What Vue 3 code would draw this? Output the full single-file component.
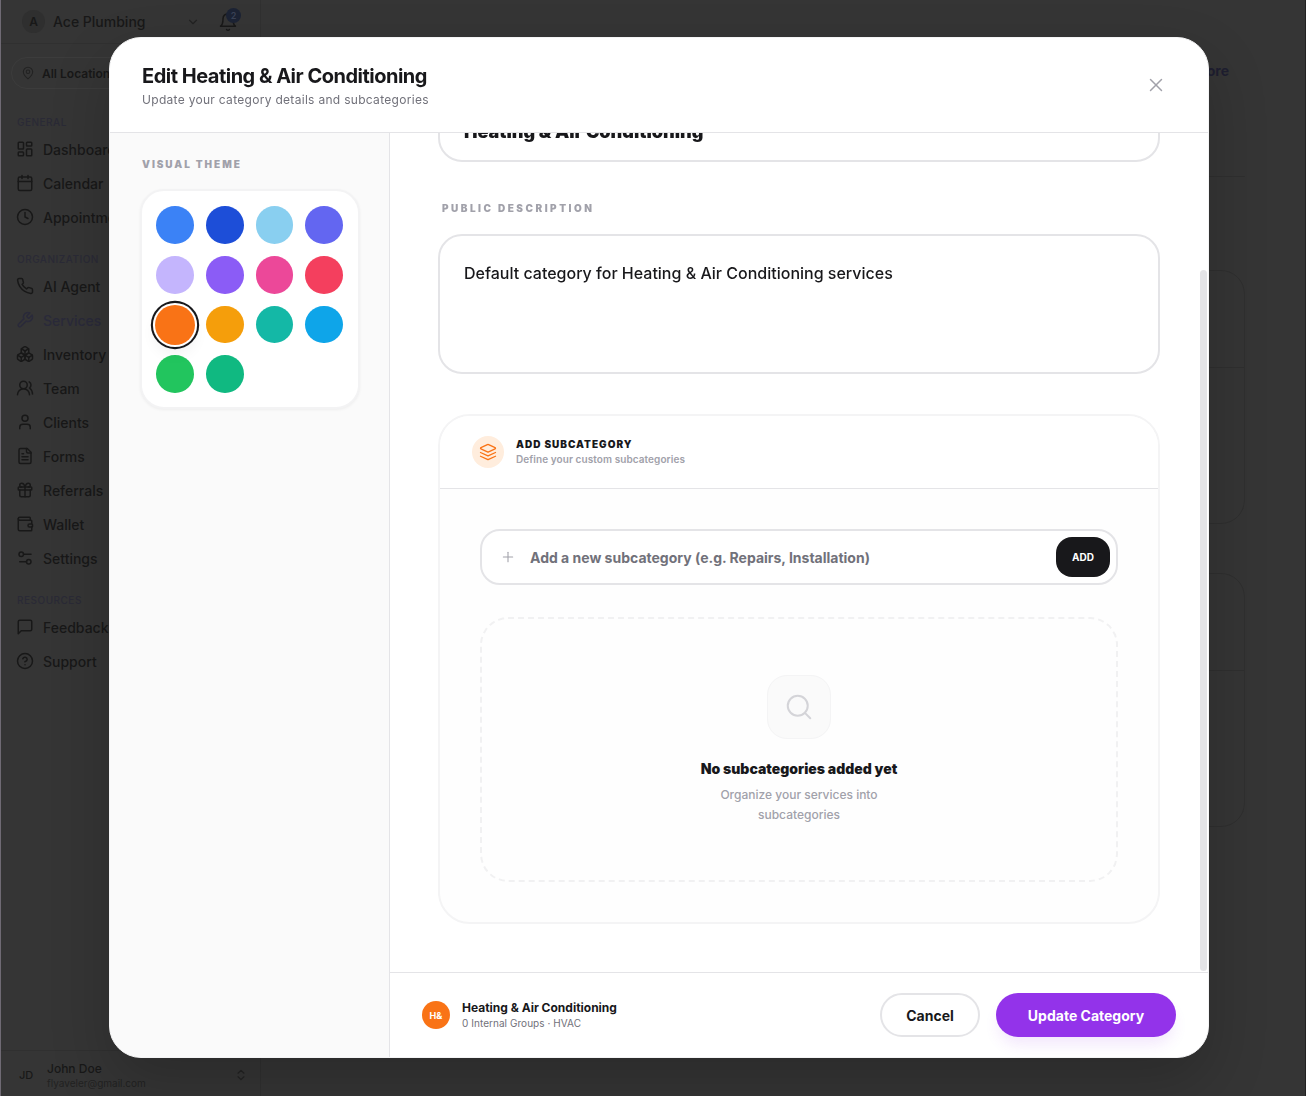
<template>
  <div class="page">
    <aside class="sidebar">
      <div class="brand">
        <span class="brand__avatar">A</span>
        <span class="brand__name">Ace Plumbing</span>
        <svg class="brand__chev" viewBox="0 0 24 24"><path d="m6 9 6 6 6-6" /></svg>
        <div class="bell">
          <svg viewBox="0 0 24 24">
            <path d="M6 8a6 6 0 0 1 12 0c0 7 3 9 3 9H3s3-2 3-9" />
            <path d="M10.3 21a1.94 1.94 0 0 0 3.4 0" />
          </svg>
          <span class="bell__badge">2</span>
        </div>
      </div>
      <div class="locations">
        <svg viewBox="0 0 24 24">
          <path d="M20 10c0 6-8 12-8 12s-8-6-8-12a8 8 0 0 1 16 0Z" />
          <path d="M9 10a3 3 0 1 0 6 0a3 3 0 1 0-6 0" />
        </svg>
        <span>All Locations</span>
      </div>
      <div v-for="group in navGroups" :key="group.title" class="nav-group">
        <div class="nav-group__title">{{ group.title }}</div>
        <div
          v-for="item in group.items"
          :key="item.label"
          class="nav-item"
          :class="{ 'nav-item--active': item.label === 'Services' }"
        >
          <svg viewBox="0 0 24 24">
            <path v-for="d in item.icon" :key="d" :d="d" />
          </svg>
          <span>{{ item.label }}</span>
        </div>
      </div>
      <div class="user">
        <span class="user__badge">JD</span>
        <div class="user__info">
          <div class="user__name">John Doe</div>
          <div class="user__mail">flyaveler@gmail.com</div>
        </div>
        <svg viewBox="0 0 24 24">
          <path d="m7 15 5 5 5-5" />
          <path d="m7 9 5-5 5 5" />
        </svg>
      </div>
    </aside>

    <main class="content">
      <div class="content__head"><span>Explore</span></div>
      <div class="bg-card"><div class="bg-card__head"></div></div>
      <div class="bg-card"><div class="bg-card__head"></div></div>
    </main>

    <div class="overlay">
      <section class="modal">
        <header class="modal__head">
          <div>
            <h2>Edit Heating &amp; Air Conditioning</h2>
            <p>Update your category details and subcategories</p>
          </div>
          <svg class="close" viewBox="0 0 24 24">
            <path d="M18 6 6 18" />
            <path d="m6 6 12 12" />
          </svg>
        </header>

        <div class="modal__body">
          <div class="theme">
            <div class="theme__label">VISUAL THEME</div>
            <div class="swatches">
              <span
                v-for="color in colors"
                :key="color"
                class="swatch"
                :class="{ 'swatch--on': color === selected }"
                :style="{ background: color }"
              ></span>
            </div>
          </div>

          <div class="editor">
            <div class="editor__scroll">
              <div class="field-name">Heating &amp; Air Conditioning</div>
              <div class="field-label">PUBLIC DESCRIPTION</div>
              <div class="field-desc">Default category for Heating &amp; Air Conditioning services</div>

              <div class="sub">
                <div class="sub__head">
                  <span class="sub__icon">
                    <svg viewBox="0 0 24 24">
                      <path d="m12.83 2.18a2 2 0 0 0-1.66 0L2.6 6.08a1 1 0 0 0 0 1.83l8.58 3.91a2 2 0 0 0 1.66 0l8.58-3.9a1 1 0 0 0 0-1.83Z" />
                      <path d="m22 17.65-9.17 4.16a2 2 0 0 1-1.66 0L2 17.65" />
                      <path d="m22 12.65-9.17 4.16a2 2 0 0 1-1.66 0L2 12.65" />
                    </svg>
                  </span>
                  <div class="sub__text">
                    <div class="sub__title">ADD SUBCATEGORY</div>
                    <div class="sub__hint">Define your custom subcategories</div>
                  </div>
                </div>
                <div class="sub__body">
                  <div class="add-row">
                    <svg viewBox="0 0 24 24">
                      <path d="M5 12h14" />
                      <path d="M12 5v14" />
                    </svg>
                    <span class="add-row__text">Add a new subcategory (e.g. Repairs, Installation)</span>
                    <button class="add-row__btn">ADD</button>
                  </div>
                  <div class="empty">
                    <div class="empty__icon">
                      <svg viewBox="0 0 24 24">
                        <path d="M3 11a8 8 0 1 0 16 0a8 8 0 1 0-16 0" />
                        <path d="m21 21-4.3-4.3" />
                      </svg>
                    </div>
                    <div class="empty__title">No subcategories added yet</div>
                    <p class="empty__text">Organize your services into subcategories</p>
                  </div>
                </div>
              </div>
            </div>
            <div class="scrollbar"></div>

            <footer class="editor__foot">
              <span class="foot__avatar">H&amp;</span>
              <div class="foot__info">
                <div class="foot__name">Heating &amp; Air Conditioning</div>
                <div class="foot__meta">0 Internal Groups · HVAC</div>
              </div>
              <button class="btn btn--ghost">Cancel</button>
              <button class="btn btn--primary">Update Category</button>
            </footer>
          </div>
        </div>
      </section>
    </div>
  </div>
</template>

<script setup>
const selected = '#f97316'

const colors = [
  '#3b82f6', '#1d4ed8', '#89cff0', '#6366f1',
  '#c4b5fd', '#8b5cf6', '#ec4899', '#f43f5e',
  '#f97316', '#f59e0b', '#14b8a6', '#0ea5e9',
  '#22c55e', '#10b981'
]

const navGroups = [
  {
    title: 'GENERAL',
    items: [
      { label: 'Dashboard', icon: ['M4 3h5a1 1 0 0 1 1 1v7a1 1 0 0 1-1 1H4a1 1 0 0 1-1-1V4a1 1 0 0 1 1-1Z', 'M15 3h5a1 1 0 0 1 1 1v3a1 1 0 0 1-1 1h-5a1 1 0 0 1-1-1V4a1 1 0 0 1 1-1Z', 'M15 12h5a1 1 0 0 1 1 1v7a1 1 0 0 1-1 1h-5a1 1 0 0 1-1-1v-7a1 1 0 0 1 1-1Z', 'M4 16h5a1 1 0 0 1 1 1v3a1 1 0 0 1-1 1H4a1 1 0 0 1-1-1v-3a1 1 0 0 1 1-1Z'] },
      { label: 'Calendar', icon: ['M8 2v4', 'M16 2v4', 'M5 4h14a2 2 0 0 1 2 2v14a2 2 0 0 1-2 2H5a2 2 0 0 1-2-2V6a2 2 0 0 1 2-2Z', 'M3 10h18'] },
      { label: 'Appointments', icon: ['M2 12a10 10 0 1 0 20 0a10 10 0 1 0-20 0', 'M12 6v6l4 2'] }
    ]
  },
  {
    title: 'ORGANIZATION',
    items: [
      { label: 'AI Agent', icon: ['M22 16.92v3a2 2 0 0 1-2.18 2 19.79 19.79 0 0 1-8.63-3.07 19.5 19.5 0 0 1-6-6 19.79 19.79 0 0 1-3.07-8.67A2 2 0 0 1 4.11 2h3a2 2 0 0 1 2 1.72 12.84 12.84 0 0 0 .7 2.81 2 2 0 0 1-.45 2.11L8.09 9.91a16 16 0 0 0 6 6l1.27-1.27a2 2 0 0 1 2.11-.45 12.84 12.84 0 0 0 2.81.7A2 2 0 0 1 22 16.92z'] },
      { label: 'Services', icon: ['M14.7 6.3a1 1 0 0 0 0 1.4l1.6 1.6a1 1 0 0 0 1.4 0l3.77-3.77a6 6 0 0 1-7.94 7.94l-6.91 6.91a2.12 2.12 0 0 1-3-3l6.91-6.91a6 6 0 0 1 7.94-7.94l-3.76 3.76z'] },
      { label: 'Inventory', icon: ['M2.97 12.92A2 2 0 0 0 2 14.63v3.24a2 2 0 0 0 .97 1.71l3 1.8a2 2 0 0 0 2.06 0L12 19v-5.5l-5-3-4.03 2.42Z', 'm7 16.5-4.74-2.85', 'm7 16.5 5-3', 'M7 16.5v5.17', 'M12 13.5V19l3.97 2.38a2 2 0 0 0 2.06 0l3-1.8a2 2 0 0 0 .97-1.71v-3.24a2 2 0 0 0-.97-1.71L17 10.5l-5 3Z', 'm17 16.5-5-3', 'm17 16.5 4.74-2.85', 'M17 16.5v5.17', 'M7.97 4.42A2 2 0 0 0 7 6.13v4.37l5 3 5-3V6.13a2 2 0 0 0-.97-1.71l-3-1.8a2 2 0 0 0-2.06 0l-3 1.8Z', 'M12 8 7.26 5.15', 'm12 8 4.74-2.85', 'M12 13.5V8'] },
      { label: 'Team', icon: ['M18 21a8 8 0 0 0-16 0', 'M5 8a5 5 0 1 0 10 0a5 5 0 1 0-10 0', 'M22 20c0-3.37-2-6.5-4-8a5 5 0 0 0-.45-8.3'] },
      { label: 'Clients', icon: ['M19 21v-2a4 4 0 0 0-4-4H9a4 4 0 0 0-4 4v2', 'M8 7a4 4 0 1 0 8 0a4 4 0 1 0-8 0'] },
      { label: 'Forms', icon: ['M15 2H6a2 2 0 0 0-2 2v16a2 2 0 0 0 2 2h12a2 2 0 0 0 2-2V7Z', 'M14 2v4a2 2 0 0 0 2 2h4', 'M10 9H8', 'M16 13H8', 'M16 17H8'] },
      { label: 'Referrals', icon: ['M4 8h16a1 1 0 0 1 1 1v2a1 1 0 0 1-1 1H4a1 1 0 0 1-1-1V9a1 1 0 0 1 1-1Z', 'M12 8v13', 'M19 12v7a2 2 0 0 1-2 2H7a2 2 0 0 1-2-2v-7', 'M7.5 8a2.5 2.5 0 0 1 0-5A4.8 8 0 0 1 12 8a4.8 8 0 0 1 4.5-5 2.5 2.5 0 0 1 0 5'] },
      { label: 'Wallet', icon: ['M19 7V4a1 1 0 0 0-1-1H5a2 2 0 0 0 0 4h15a1 1 0 0 1 1 1v4h-3a2 2 0 0 0 0 4h3a1 1 0 0 0 1-1v-2a1 1 0 0 0-1-1', 'M3 5v14a2 2 0 0 0 2 2h15a1 1 0 0 0 1-1v-4'] },
      { label: 'Settings', icon: ['M20 7h-9', 'M14 17H5', 'M14 17a3 3 0 1 0 6 0a3 3 0 1 0-6 0', 'M4 7a3 3 0 1 0 6 0a3 3 0 1 0-6 0'] }
    ]
  },
  {
    title: 'RESOURCES',
    items: [
      { label: 'Feedback', icon: ['M21 15a2 2 0 0 1-2 2H7l-4 4V5a2 2 0 0 1 2-2h14a2 2 0 0 1 2 2z'] },
      { label: 'Support', icon: ['M2 12a10 10 0 1 0 20 0a10 10 0 1 0-20 0', 'M9.09 9a3 3 0 0 1 5.83 1c0 2-3 3-3 3', 'M12 17h.01'] }
    ]
  }
]
</script>

<style>
html, body {
  margin: 0;
  background: #353535;
}
</style>

<style scoped>
* {
  box-sizing: border-box;
}

.page {
  display: flex;
  width: 100%;
  height: 100vh;
  overflow: hidden;
  background: #353535;
  border-left: 1px solid #6f6a74;
  border-right: 1px solid #222;
  font-family: Inter, "Liberation Sans", sans-serif;
  color: #181818;
}

svg {
  fill: none;
  stroke: currentColor;
  stroke-width: 2;
  stroke-linecap: round;
  stroke-linejoin: round;
  flex-shrink: 0;
}

/* sidebar behind the dialog */
.sidebar {
  width: 260px;
  flex-shrink: 0;
  display: flex;
  flex-direction: column;
  border-right: 1px solid #303030;
}

.brand {
  height: 44px;
  display: flex;
  align-items: center;
  padding-left: 21px;
  border-bottom: 1px solid #303030;
  flex-shrink: 0;
}

.brand__avatar {
  width: 23px;
  height: 23px;
  border-radius: 50%;
  background: #2f2f2f;
  display: flex;
  align-items: center;
  justify-content: center;
  font-size: 12px;
  font-weight: 600;
}

.brand__name {
  margin-left: 8px;
  font-size: 14px;
  font-weight: 500;
  width: 133px;
}

.brand__chev {
  width: 14px;
  height: 14px;
  color: #222;
}

.bell {
  position: relative;
  margin-left: 18px;
  width: 20px;
  height: 20px;
}

.bell svg {
  width: 20px;
  height: 20px;
  display: block;
  stroke-width: 1.8;
}

.bell__badge {
  position: absolute;
  top: -4px;
  left: 8px;
  width: 15px;
  height: 15px;
  border-radius: 50%;
  background: #1c2334;
  color: #3a4256;
  font-size: 9px;
  font-weight: 600;
  display: flex;
  align-items: center;
  justify-content: center;
}

.locations {
  margin: 13px 10px 0;
  height: 32px;
  border: 1px solid #3c3c3c;
  border-radius: 16px;
  display: flex;
  align-items: center;
  padding-left: 9px;
  gap: 7px;
  font-size: 12px;
  font-weight: 600;
  flex-shrink: 0;
}

.locations svg {
  width: 14px;
  height: 14px;
  color: #222;
  stroke-width: 1.8;
}

.nav-group {
  margin-top: 17px;
  padding: 0 16px;
}

.locations + .nav-group {
  margin-top: 25px;
}

.nav-group__title {
  height: 14px;
  line-height: 16px;
  margin-bottom: 4px;
  font-size: 10px;
  font-weight: 500;
  letter-spacing: 0.5px;
  color: #2a2a36;
}

.nav-item {
  height: 34px;
  display: flex;
  align-items: center;
  gap: 9px;
  font-size: 14px;
  font-weight: 500;
  white-space: nowrap;
}

.nav-item svg {
  width: 18px;
  height: 18px;
  margin-left: -1px;
  color: #181818;
}

.nav-item--active,
.nav-item--active svg {
  color: #2a2a3a;
}

.user {
  margin-top: auto;
  height: 46px;
  display: flex;
  align-items: center;
  padding: 3px 12px 0 18px;
  border-top: 1px solid #303030;
}

.user__badge {
  width: 28px;
  font-size: 11px;
  font-weight: 500;
}

.user__info {
  flex: 1;
}

.user__name {
  font-size: 12px;
  font-weight: 500;
  line-height: 15px;
}

.user__mail {
  font-size: 10px;
  line-height: 14px;
  color: #222;
}

.user svg {
  width: 14px;
  height: 14px;
  color: #222;
}

/* main page behind the dialog */
.content {
  flex: 1;
  padding: 0 60px 0 24px;
}

.content__head {
  height: 177px;
  padding: 62px 16px 0 0;
  text-align: right;
  font-size: 14px;
  font-weight: 700;
  color: #1e1e30;
  border-bottom: 1px solid #2f2f2f;
}

.bg-card {
  height: 254px;
  margin-top: 93px;
  border: 1px solid #2f2f2f;
  border-radius: 24px;
}

.bg-card + .bg-card {
  margin-top: 49px;
}

.bg-card__head {
  height: 97px;
  border-bottom: 1px solid #2f2f2f;
}

/* dialog */
.overlay {
  position: fixed;
  inset: 0;
  padding: 0 0 1px 12px;
  display: flex;
  align-items: center;
  justify-content: center;
}

.modal {
  width: 1100px;
  height: 1021px;
  background: #fff;
  border: 1px solid #f4f4f5;
  border-radius: 32px;
  overflow: hidden;
  display: flex;
  flex-direction: column;
  box-shadow: 0 25px 60px rgba(0, 0, 0, 0.2);
}

.modal__head {
  height: 95px;
  flex-shrink: 0;
  display: flex;
  align-items: center;
  justify-content: space-between;
  padding: 0 41px 0 32px;
  border-bottom: 1px solid #e4e4e7;
}

.modal__head h2 {
  margin: 0;
  font-size: 20px;
  line-height: 28px;
  font-weight: 700;
  letter-spacing: -0.5px;
  color: #18181b;
}

.modal__head p {
  margin: 1px 0 0;
  font-size: 12px;
  line-height: 18px;
  letter-spacing: 0.3px;
  color: #71717a;
}

.close {
  width: 22px;
  height: 22px;
  color: #a1a1aa;
  stroke-width: 1.6;
}

.modal__body {
  flex: 1;
  display: flex;
  min-height: 0;
}

.theme {
  width: 280px;
  flex-shrink: 0;
  background: #fafafa;
  border-right: 1px solid #e4e4e7;
  padding: 25px 0 0 30px;
}

.theme__label {
  height: 12px;
  line-height: 12px;
  margin-left: 2px;
  font-size: 10px;
  font-weight: 900;
  letter-spacing: 1.95px;
  color: #a1a1aa;
}

.swatches {
  width: 220px;
  margin-top: 19px;
  padding: 15px 15px 14px 14px;
  background: #fff;
  border: 2px solid #f3f3f4;
  border-radius: 24px;
  box-shadow: 0 1px 3px rgba(0, 0, 0, 0.05);
  display: grid;
  grid-template-columns: repeat(4, 1fr);
  gap: 12px;
}

.swatch {
  aspect-ratio: 1;
  border-radius: 50%;
}

.swatch--on {
  transform: scale(1.05);
  box-shadow: 0 0 0 2px #fff, 0 0 0 4px #18181b, 0 8px 14px rgba(0, 0, 0, 0.06);
}

.editor {
  position: relative;
  flex: 1;
  min-width: 0;
  display: flex;
  flex-direction: column;
}

.editor__scroll {
  flex: 1;
  min-height: 0;
  overflow: hidden;
  padding: 0 48px;
}

.field-name {
  height: 62px;
  margin-top: -33px;
  padding-left: 24px;
  line-height: 60px;
  border: 2px solid #e4e4e7;
  border-radius: 24px;
  font-size: 18px;
  font-weight: 900;
  color: #18181b;
}

.field-label {
  margin: 40px 0 0 4px;
  height: 12px;
  line-height: 12px;
  font-size: 10px;
  font-weight: 900;
  letter-spacing: 2.5px;
  color: #a1a1aa;
}

.field-desc {
  height: 140px;
  margin-top: 20px;
  padding: 26px 24px;
  border: 2px solid #e4e4e7;
  border-radius: 24px;
  font-size: 16px;
  font-weight: 500;
  line-height: 22px;
  color: #18181b;
}

.sub {
  height: 510px;
  margin-top: 40px;
  border: 2px solid #f4f4f5;
  border-radius: 32px;
  overflow: hidden;
  background: #fefefe;
}

.sub__head {
  height: 73px;
  display: flex;
  align-items: center;
  gap: 12px;
  padding-left: 32px;
  background: #fff;
  border-bottom: 1px solid #e4e4e7;
}

.sub__icon {
  width: 32px;
  height: 32px;
  border-radius: 50%;
  background: #ffeddd;
  display: flex;
  align-items: center;
  justify-content: center;
  color: #f97316;
}

.sub__icon svg {
  width: 18px;
  height: 18px;
  stroke-width: 1.7;
}

.sub__text {
  margin-bottom: 2px;
}

.sub__title {
  font-size: 10px;
  font-weight: 900;
  line-height: 14px;
  letter-spacing: 1px;
  color: #18181b;
}

.sub__hint {
  margin-top: 1px;
  font-size: 10px;
  font-weight: 600;
  line-height: 14px;
  letter-spacing: 0.08px;
  color: #a1a1aa;
}

.sub__body {
  padding: 40px;
}

.add-row {
  height: 56px;
  display: flex;
  align-items: center;
  padding: 0 6px 0 18px;
  background: #fff;
  border: 2px solid #e4e4e7;
  border-radius: 20px;
}

.add-row svg {
  width: 16px;
  height: 16px;
  color: #a1a1aa;
  stroke-width: 1.6;
}

.add-row__text {
  flex: 1;
  margin-left: 14px;
  font-size: 14px;
  font-weight: 700;
  color: #71717a;
}

.add-row__btn {
  width: 54px;
  height: 40px;
  border: 0;
  border-radius: 16px;
  background: #18181b;
  color: #fff;
  font-family: inherit;
  font-size: 10px;
  font-weight: 700;
}

.empty {
  height: 265px;
  margin-top: 32px;
  padding-top: 56px;
  border: 2px dashed #f1f1f2;
  border-radius: 28px;
  display: flex;
  flex-direction: column;
  align-items: center;
}

.empty__icon {
  width: 64px;
  height: 64px;
  border-radius: 20px;
  background: #fafafa;
  border: 1px solid #f4f4f5;
  display: flex;
  align-items: center;
  justify-content: center;
  color: #d4d4d8;
}

.empty__icon svg {
  width: 30px;
  height: 30px;
  stroke-width: 1.6;
}

.empty__title {
  margin-top: 20px;
  font-size: 14px;
  font-weight: 900;
  line-height: 20px;
  color: #18181b;
}

.empty__text {
  width: 220px;
  margin: 6px 0 0;
  text-align: center;
  font-size: 12px;
  font-weight: 500;
  line-height: 20px;
  color: #a1a1aa;
}

.scrollbar {
  position: absolute;
  top: 137px;
  right: 1px;
  width: 7px;
  height: 701px;
  border-radius: 4px;
  background: #e4e4e7;
}

.editor__foot {
  height: 85px;
  flex-shrink: 0;
  display: flex;
  align-items: center;
  padding: 0 32px;
  background: #fff;
  border-top: 1px solid #e4e4e7;
}

.foot__avatar {
  width: 28px;
  height: 28px;
  border-radius: 50%;
  background: #f97316;
  color: #fff;
  display: flex;
  align-items: center;
  justify-content: center;
  font-size: 9px;
  font-weight: 700;
}

.foot__info {
  flex: 1;
  margin-left: 12px;
}

.foot__name {
  font-size: 12px;
  font-weight: 700;
  line-height: 16px;
  color: #18181b;
}

.foot__meta {
  font-size: 10px;
  line-height: 15px;
  letter-spacing: 0.05px;
  color: #71717a;
}

.btn {
  height: 44px;
  border-radius: 22px;
  font-family: inherit;
  font-size: 14px;
  font-weight: 700;
}

.btn--ghost {
  width: 100px;
  background: #fff;
  border: 2px solid #e4e4e7;
  color: #18181b;
}

.btn--primary {
  width: 180px;
  margin-left: 16px;
  background: #9333ea;
  border: 0;
  color: #fff;
  box-shadow: 0 10px 15px -3px rgba(147, 51, 234, 0.12);
}
</style>
